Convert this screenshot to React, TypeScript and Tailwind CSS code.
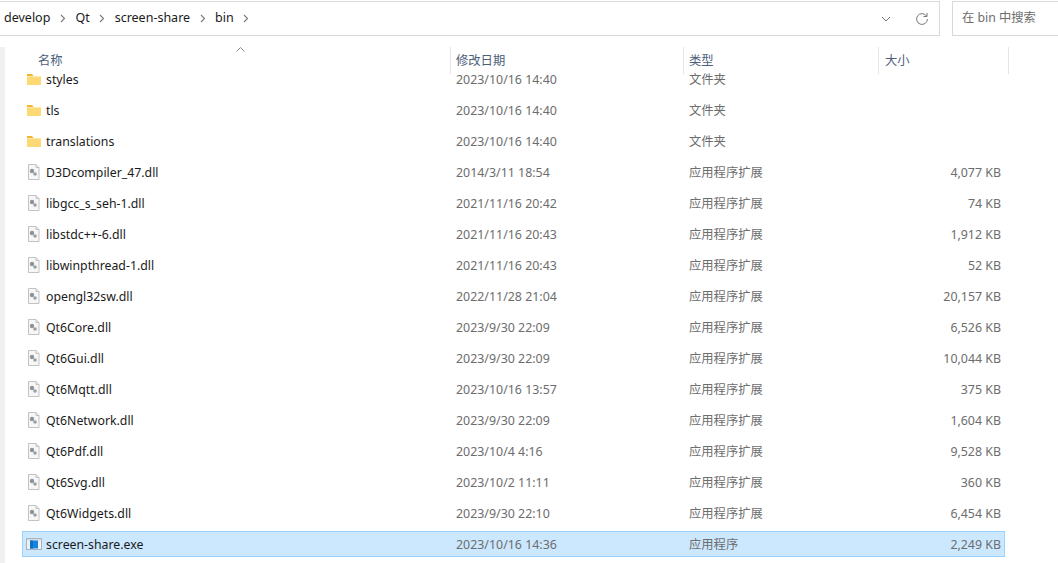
const FONT = "font-['Noto_Sans','Noto_Sans_CJK_SC',sans-serif]";

const rows: [string, string, string, string, "folder" | "dll" | "exe"][] = [
  ["styles", "2023/10/16 14:40", "文件夹", "", "folder"],
  ["tls", "2023/10/16 14:40", "文件夹", "", "folder"],
  ["translations", "2023/10/16 14:40", "文件夹", "", "folder"],
  ["D3Dcompiler_47.dll", "2014/3/11 18:54", "应用程序扩展", "4,077 KB", "dll"],
  ["libgcc_s_seh-1.dll", "2021/11/16 20:42", "应用程序扩展", "74 KB", "dll"],
  ["libstdc++-6.dll", "2021/11/16 20:43", "应用程序扩展", "1,912 KB", "dll"],
  ["libwinpthread-1.dll", "2021/11/16 20:43", "应用程序扩展", "52 KB", "dll"],
  ["opengl32sw.dll", "2022/11/28 21:04", "应用程序扩展", "20,157 KB", "dll"],
  ["Qt6Core.dll", "2023/9/30 22:09", "应用程序扩展", "6,526 KB", "dll"],
  ["Qt6Gui.dll", "2023/9/30 22:09", "应用程序扩展", "10,044 KB", "dll"],
  ["Qt6Mqtt.dll", "2023/10/16 13:57", "应用程序扩展", "375 KB", "dll"],
  ["Qt6Network.dll", "2023/9/30 22:09", "应用程序扩展", "1,604 KB", "dll"],
  ["Qt6Pdf.dll", "2023/10/4 4:16", "应用程序扩展", "9,528 KB", "dll"],
  ["Qt6Svg.dll", "2023/10/2 11:11", "应用程序扩展", "360 KB", "dll"],
  ["Qt6Widgets.dll", "2023/9/30 22:10", "应用程序扩展", "6,454 KB", "dll"],
  ["screen-share.exe", "2023/10/16 14:36", "应用程序", "2,249 KB", "exe"],
];

function Chevron() {
  return (
    <span className="w-[25px] flex justify-center shrink-0">
      <svg width="6" height="9" viewBox="0 0 6 9">
        <path d="M1 1l3.5 3.5L1 8" fill="none" stroke="#7a7a7a" strokeWidth="1.1" />
      </svg>
    </span>
  );
}

function FileIcon({ kind }: { kind: "folder" | "dll" | "exe" }) {
  if (kind === "folder") {
    return (
      <svg width="16" height="16" viewBox="0 0 16 16">
        <path d="M1 3h5l1.2 1.5V6H1z" fill="#f3b52f" />
        <rect x="1" y="5" width="14" height="9" fill="#fdd976" />
        <rect x="1" y="5" width="14" height="1" fill="#fdeaa9" />
      </svg>
    );
  }
  if (kind === "dll") {
    return (
      <svg width="16" height="16" viewBox="0 0 16 16">
        <path d="M2.5 0.5h7.5l3 3v12h-10.500z" fill="#f7f7f7" stroke="#c2c2c2" />
        <path d="M10 0.5v3h3" fill="#e9e9e9" stroke="#c2c2c2" />
        <circle cx="6" cy="7" r="2.200" fill="#8d9499" />
        <circle cx="9" cy="10" r="1.800" fill="#9aa0a5" />
      </svg>
    );
  }
  return (
    <svg width="16" height="16" viewBox="0 0 16 16">
      <rect x="0.5" y="2.500" width="15" height="11" fill="#eef2f5" stroke="#a9b3bb" />
      <rect x="1" y="3" width="14" height="1.5" fill="#d5dce2" />
      <rect x="4" y="4.500" width="8" height="8" fill="#1484de" />
      <rect x="4" y="4.500" width="3" height="8" fill="#0f6fc0" />
    </svg>
  );
}

export default function App() {
  return (
    <div className={`w-[1058px] h-[563px] overflow-hidden bg-white ${FONT} text-[12.3px] text-[#1a1a1a]`}>
      <div className="flex h-[35px] mt-px">
        <div className="flex items-center w-[940px] h-[35px] border-y border-r border-[#d9d9d9] pl-1 text-[12.5px]">
          <span>develop</span>
          <Chevron />
          <span>Qt</span>
          <Chevron />
          <span>screen-share</span>
          <Chevron />
          <span>bin</span>
          <Chevron />
          <div className="ml-auto flex items-center">
            <svg width="10" height="6" viewBox="0 0 10 6" className="mr-[24px]">
              <path d="M1 1l4 4 4-4" fill="none" stroke="#777" strokeWidth="1" />
            </svg>
            <svg width="14" height="14" viewBox="0 0 14 14" className="mr-[10px]">
              <path d="M11.6 4.2A5.4 5.4 0 1 0 12.4 7" fill="none" stroke="#777" strokeWidth="1" />
              <path d="M12 1v3.500H8.500" fill="none" stroke="#777" strokeWidth="1" />
            </svg>
          </div>
        </div>
        <div className="ml-3 flex-1 flex items-center h-[35px] border-y border-l border-[#d9d9d9] pl-[9px] text-[#6d6d6d]">
          在 bin 中搜索
        </div>
      </div>
      <div className="flex mt-[11px]">
        <div className="w-[5px] h-[516px] bg-[#f0f0f0] shrink-0" />
        <div className="flex-1 min-w-0">
          <div className="flex h-[27px] text-[#4c607a]">
            <div className="w-[446px] pl-[33px] pt-[5px] relative border-r border-[#e5e5e5]">
              名称
              <svg width="9" height="5" viewBox="0 0 9 5" className="absolute left-[231px] top-0">
                <path d="M0.5 4.500l4-4 4 4" fill="none" stroke="#8a8a8a" strokeWidth="1" />
              </svg>
            </div>
            <div className="w-[233px] pl-[5px] pt-[5px] border-r border-[#e5e5e5]">修改日期</div>
            <div className="w-[195px] pl-[5px] pt-[5px] border-r border-[#e5e5e5]">类型</div>
            <div className="w-[130px] pl-[6px] pt-[5px] border-r border-[#e5e5e5]">大小</div>
          </div>
          <div className="flex flex-col gap-[5px] mt-[-8px] ml-[17px] w-[983px]">
            {rows.map(([name, date, type, size, kind]) => (
              <div
                key={name}
                className={`flex items-center h-[26px] border ${kind === "exe" ? "bg-[#cce8ff] border-[#99d1ff]" : "border-transparent"}`}
              >
                <div className="w-[433px] flex items-center pl-[3px] shrink-0">
                  <FileIcon kind={kind} />
                  <span className="ml-[4px] pt-[2px]">{name}</span>
                </div>
                <div className="w-[233px] pt-[2px] text-[12.4px] text-[#6d6d6d] shrink-0">{date}</div>
                <div className="w-[194px] pt-[2px] text-[#6d6d6d] shrink-0">{type}</div>
                <div className="w-[118px] pt-[2px] text-[12.4px] text-right text-[#6d6d6d] shrink-0">{size}</div>
              </div>
            ))}
          </div>
        </div>
      </div>
    </div>
  );
}
